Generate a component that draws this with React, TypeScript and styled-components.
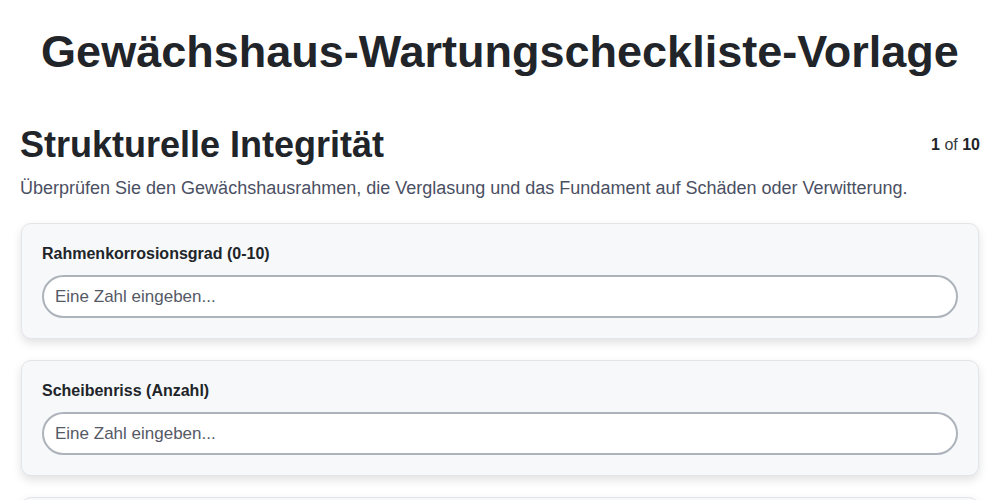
import styled, { createGlobalStyle } from 'styled-components';

const GlobalStyle = createGlobalStyle`
  body {
    margin: 0;
    background: #ffffff;
    font-family: "Liberation Sans", Arial, sans-serif;
    color: #212529;
  }
`

interface IField {
  id: string;
  label: string;
}

const fields: IField[] = [
  { id: 'frame', label: 'Rahmenkorrosionsgrad (0-10)' },
  { id: 'glass', label: 'Scheibenriss (Anzahl)' },
  { id: 'base', label: 'Fundamentrisse (Anzahl)' },
];

function App(): JSX.Element {
  return (
    <>
      <GlobalStyle />
      <Page>
        <Title>Gewächshaus-Wartungscheckliste-Vorlage</Title>
        <SectionHeader>
          <SectionTitle>Strukturelle Integrität</SectionTitle>
          <Progress>
            <b>1</b> of <b>10</b>
          </Progress>
        </SectionHeader>
        <Description>
          Überprüfen Sie den Gewächshausrahmen, die Verglasung und das Fundament auf Schäden oder Verwitterung.
        </Description>
        <CardList>
          {fields.map((f) => (
            <Card key={f.id}>
              <Label htmlFor={f.id}>{f.label}</Label>
              <NumberInput id={f.id} type="number" placeholder="Eine Zahl eingeben..." />
            </Card>
          ))}
        </CardList>
      </Page>
    </>
  )
}

export default App;

const Page = styled.div`
    padding : 0 20px;
`
const Title = styled.h1`
    margin : 0;
    padding-top : 26px;
    height : 94px;
    box-sizing : border-box;
    text-align : center;
    white-space : nowrap;
    font-size : 45px;
    line-height : 52px;
    font-weight : 700;
    color : #212529;
`
const SectionHeader = styled.div`
    display : flex;
    align-items : center;
    justify-content : space-between;
    margin-top : 31px;
`
const SectionTitle = styled.h2`
    margin : 0;
    font-size : 36px;
    line-height : 40px;
    font-weight : 700;
    color : #212529;
`
const Progress = styled.span`
    font-size : 16px;
    color : #343a40;
    b {
        color : #212529;
    }
`
const Description = styled.p`
    margin : 11px 0 0;
    font-size : 18px;
    line-height : 24px;
    color : #4a5063;
`
const CardList = styled.div`
    display : flex;
    flex-direction : column;
    gap : 21px;
    margin-top : 23px;
    padding : 0 1px;
`
const Card = styled.div`
    display : flex;
    flex-direction : column;
    background-color : #f7f8fa;
    border : 1px solid #e3e5e9;
    border-radius : 10px;
    padding : 20px 20px 20px;
    box-shadow : 0 4px 10px rgba(0, 0, 0, 0.12);
`
const Label = styled.label`
    font-size : 16px;
    font-weight : 700;
    line-height : 20px;
    margin-bottom : 11px;
    color : #212529;
`
const NumberInput = styled.input`
    height : 43px;
    box-sizing : border-box;
    border : 2px solid #adb3bb;
    border-radius : 22px;
    background : #ffffff;
    padding : 0 11px;
    font-family : "Liberation Sans", Arial, sans-serif;
    font-size : 17px;
    color : #212529;
    outline : none;
    &::placeholder {
        color : #555a66;
    }
    &::-webkit-inner-spin-button,
    &::-webkit-outer-spin-button {
        -webkit-appearance : none;
        margin : 0;
    }
`
